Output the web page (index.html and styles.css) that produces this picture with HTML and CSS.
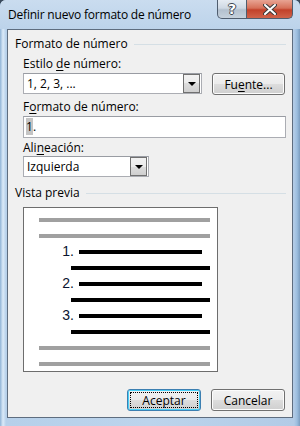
FILE: index.html
```html
<!DOCTYPE html>
<html lang="es">
<head>
    <meta charset="utf-8">
    <title>Definir nuevo formato de número</title>
    <link rel="stylesheet" href="styles.css">
</head>
<body>
    <div class="window">
        <div class="titlebar">
            <span class="title">Definir nuevo formato de número</span>
            <div class="caption">
                <div class="capBtn help">?</div>
                <div class="capBtn close">
                    <svg width="14" height="11" viewBox="0 0 14 11">
                        <path d="M2 1 L12 10 M12 1 L2 10" stroke="#3a3a3a" stroke-width="4" stroke-linecap="round"/>
                        <path d="M2 1 L12 10 M12 1 L2 10" stroke="#ffffff" stroke-width="2" stroke-linecap="round"/>
                    </svg>
                </div>
            </div>
        </div>
        <div class="client">
            <div class="groupHead"><span>Formato de número</span><div class="rule"></div></div>
            <div class="label lblStyle">Estilo <u>d</u>e número:</div>
            <div class="row">
                <div class="combo wide">
                    <span class="comboTxt">1, 2, 3, ...</span>
                    <div class="dropBtn"><div class="arrow"></div></div>
                </div>
                <div class="btn fuente">Fu<u>e</u>nte...</div>
            </div>
            <div class="label lblFormat">F<u>o</u>rmato de número:</div>
            <div class="textbox"><span class="sel">1</span>.</div>
            <div class="label lblAlign">Ali<u>n</u>eación:</div>
            <div class="combo narrow">
                <span class="comboTxt">Izquierda</span>
                <div class="dropBtn"><div class="arrow"></div></div>
            </div>
            <div class="groupHead second"><span>Vista previa</span><div class="rule"></div></div>
            <div class="preview">
                <div class="bar gray"></div>
                <div class="bar gray"></div>
                <div class="numRow"><span class="num">1.</span><div class="bar black short"></div></div>
                <div class="bar black long"></div>
                <div class="numRow"><span class="num">2.</span><div class="bar black short"></div></div>
                <div class="bar black long"></div>
                <div class="numRow"><span class="num">3.</span><div class="bar black short"></div></div>
                <div class="bar black long"></div>
                <div class="bar gray"></div>
                <div class="bar gray"></div>
            </div>
            <div class="actions">
                <div class="btn dlgBtn default"><span class="focusRect">Aceptar</span></div>
                <div class="btn dlgBtn">Cancelar</div>
            </div>
        </div>
    </div>
</body>
</html>
```

FILE: styles.css
```css
body {
    margin: 0;
    font-family: "Open Sans", "Noto Sans", sans-serif;
    font-size: 12px;
    color: #000000;
    background: #3a4a5c;
}

.window {
    width: 300px;
    height: 426px;
    box-sizing: border-box;
    display: flex;
    flex-direction: column;
    background: linear-gradient(to right, #8fb3d6 0px, #dbeaf8 3px, #b6d0ea 6px, #bcd4ec 50%, #b2cbe6 294px, #9cbedf 297px, #7b9cbf 300px);
    border-radius: 6px 6px 0 0;
}

.titlebar {
    height: 29px;
    display: flex;
    justify-content: space-between;
    align-items: flex-start;
    padding: 0 7px 0 8px;
    background: linear-gradient(to bottom, #cadcef, #bcd3ea);
    border-radius: 6px 6px 0 0;
}

.title {
    margin-top: 7px;
    line-height: 16px;
    letter-spacing: -0.2px;
}

.caption {
    display: flex;
}

.capBtn {
    height: 19px;
    box-sizing: border-box;
    display: flex;
    align-items: center;
    justify-content: center;
    border: 1px solid #4f5d6e;
    border-top: none;
}

.help {
    width: 30px;
    border-radius: 0 0 0 5px;
    background: linear-gradient(to bottom, #e6ecf3 0%, #cfd9e4 45%, #b3c0ce 55%, #c6d1dc 100%);
    color: #ffffff;
    font-family: "DejaVu Sans", sans-serif;
    font-weight: bold;
    font-size: 14px;
    text-shadow: -1px 0 #3d4650, 1px 0 #3d4650, 0 -1px #3d4650, 0 1px #3d4650;
}

.close {
    width: 46px;
    border-left: none;
    border-radius: 0 0 5px 0;
    background: linear-gradient(to bottom, #e8a493 0%, #d67059 45%, #c2412a 55%, #d0634a 100%);
}

.client {
    flex: 1;
    margin: 0 7px 8px 7px;
    border: 1px solid #5e6d7f;
    background: #f0f0f0;
    display: flex;
    flex-direction: column;
}

.groupHead {
    display: flex;
    align-items: center;
    margin-top: 7px;
    padding: 0 6px 0 7px;
    line-height: 14px;
}

.groupHead.second {
    margin-top: 9px;
}

.rule {
    flex: 1;
    height: 1px;
    margin-left: 6px;
    background: #d5dfe5;
}

.label {
    padding-left: 15px;
    line-height: 14px;
}

.lblStyle {
    margin-top: 6px;
}

.lblFormat {
    margin-top: 5px;
}

.lblAlign {
    margin-top: 3px;
}

u {
    text-decoration-thickness: 1px;
    text-underline-offset: 2px;
}

.row {
    display: flex;
    margin-top: 2px;
    padding-left: 15px;
}

.combo {
    height: 21px;
    box-sizing: border-box;
    display: flex;
    align-items: center;
    border: 1px solid #abadb3;
    border-top-color: #999ca3;
    background: #ffffff;
    padding: 1px;
}

.combo.wide {
    width: 179px;
}

.combo.narrow {
    width: 126px;
    margin: 1px 0 0 15px;
}

.comboTxt {
    flex: 1;
    padding-left: 2px;
}

.dropBtn {
    width: 17px;
    height: 19px;
    box-sizing: border-box;
    border: 1px solid #707070;
    background: linear-gradient(to bottom, #f2f2f2, #ebebeb 50%, #dddddd 50%, #cfcfcf);
    display: flex;
    align-items: center;
    justify-content: center;
}

.arrow {
    width: 0;
    height: 0;
    border-left: 4px solid transparent;
    border-right: 4px solid transparent;
    border-top: 4px solid #000000;
}

.btn {
    height: 22px;
    box-sizing: border-box;
    display: flex;
    align-items: center;
    justify-content: center;
    border: 1px solid #707070;
    border-radius: 3px;
    background: linear-gradient(to bottom, #f2f2f2, #ebebeb 50%, #dddddd 50%, #cfcfcf);
    box-shadow: inset 0 0 0 1px #fcfcfc;
}

.fuente {
    width: 73px;
    margin-left: 10px;
}

.textbox {
    height: 22px;
    box-sizing: border-box;
    margin: 2px 6px 0 15px;
    border: 1px solid #abadb3;
    border-top-color: #999ca3;
    background: #ffffff;
    padding: 1px 2px;
    line-height: 18px;
}

.sel {
    background: #c4c4c4;
}

.preview {
    width: 195px;
    box-sizing: border-box;
    margin: 7px 0 0 15px;
    border: 1px solid #6d6d6d;
    background: #ffffff;
    padding: 10px 0 5px 15px;
    display: flex;
    flex-direction: column;
    gap: 12px;
}

.bar {
    height: 4px;
}

.gray {
    width: 171px;
    background: #a0a0a0;
}

.black {
    background: #000000;
}

.long {
    width: 139px;
    margin-left: 32px;
}

.short {
    width: 123px;
}

.numRow {
    display: flex;
    align-items: center;
    height: 4px;
}

.num {
    width: 35px;
    margin-right: 5px;
    text-align: right;
    font-family: "Liberation Sans", Arial, sans-serif;
    font-size: 14px;
    line-height: 4px;
    color: #0a1430;
    position: relative;
    top: -1px;
}

.actions {
    display: flex;
    justify-content: flex-end;
    gap: 10px;
    margin-top: 17px;
    padding-right: 7px;
}

.dlgBtn {
    width: 74px;
}

.default {
    border-color: #3c7fb1;
    box-shadow: inset 0 0 0 1px #48d0f8;
}

.focusRect {
    display: flex;
    align-items: center;
    justify-content: center;
    width: 68px;
    height: 16px;
    box-sizing: border-box;
    border: 1px dotted #000000;
}
```
